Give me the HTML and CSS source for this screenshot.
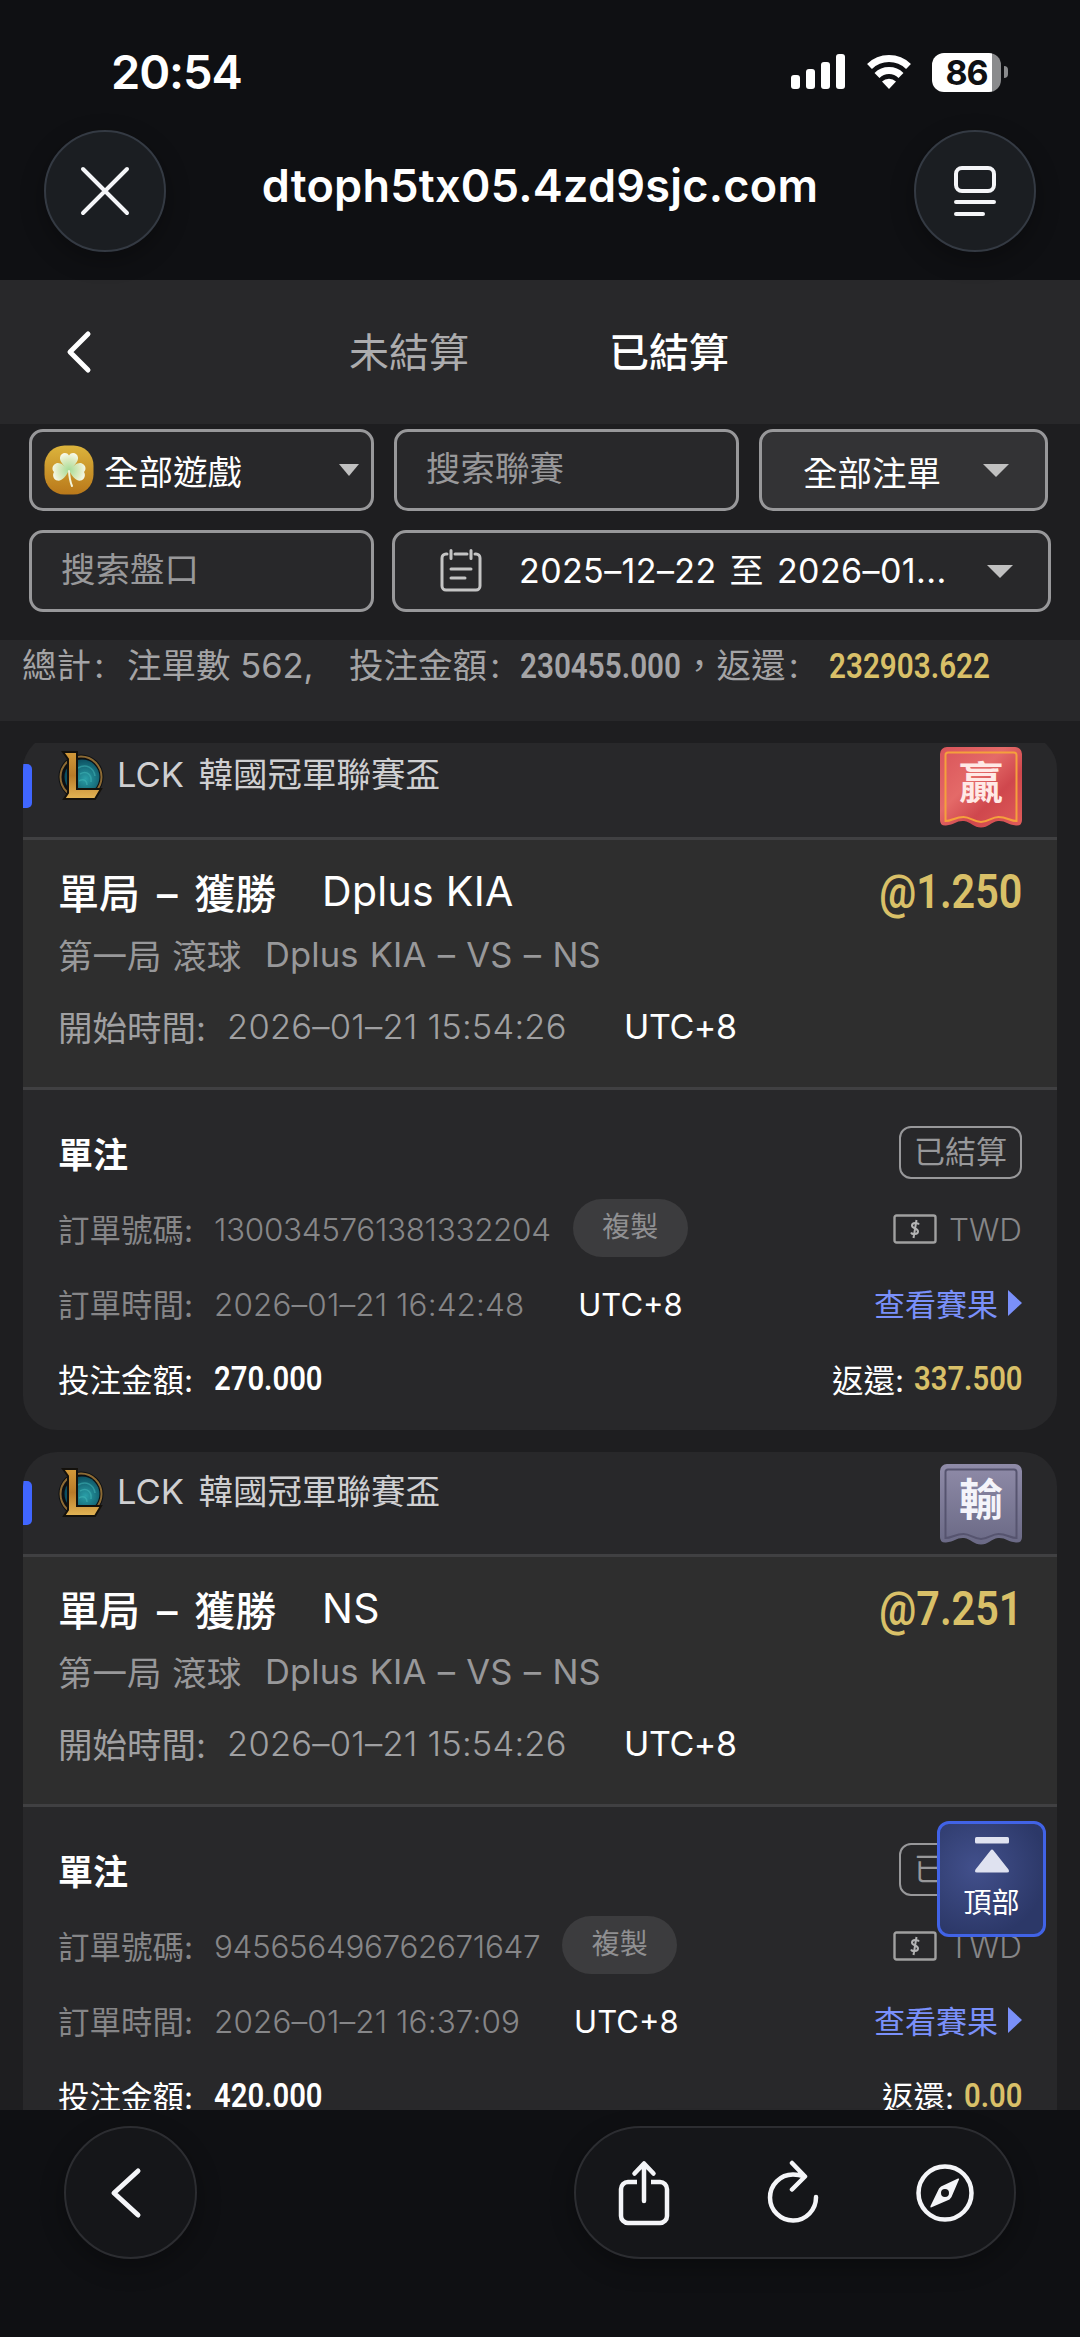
FILE: index.html
```html
<!DOCTYPE html>
<html lang="zh-Hant">
<head>
    <meta charset="UTF-8">
    <meta name="viewport" content="width=device-width, initial-scale=1.0">
    <title>已結算</title>
    <link rel="stylesheet" href="styles.css">
</head>
<body>
    <!-- shared icons -->
    <svg class="defs" width="0" height="0">
        <defs>
            <linearGradient id="gold" x1="0" y1="0" x2="0" y2="1">
                <stop offset="0" stop-color="#d39a3a"/>
                <stop offset="0.5" stop-color="#b97b28"/>
                <stop offset="1" stop-color="#e3b556"/>
            </linearGradient>
            <radialGradient id="teal" cx="0.6" cy="0.55" r="0.6">
                <stop offset="0" stop-color="#2a9fa8"/>
                <stop offset="1" stop-color="#0a4a5c"/>
            </radialGradient>
            <linearGradient id="red" x1="0" y1="0" x2="1" y2="1">
                <stop offset="0" stop-color="#d9545a"/>
                <stop offset="0.4" stop-color="#e46a68"/>
                <stop offset="0.65" stop-color="#cf474d"/>
                <stop offset="1" stop-color="#e05c5a"/>
            </linearGradient>
            <linearGradient id="grey" x1="0" y1="0" x2="0" y2="1">
                <stop offset="0" stop-color="#8f8ba8"/>
                <stop offset="1" stop-color="#6a6985"/>
            </linearGradient>
            <linearGradient id="coin" x1="0" y1="0" x2="0" y2="1">
                <stop offset="0" stop-color="#dcb43c"/>
                <stop offset="1" stop-color="#b9781a"/>
            </linearGradient>
            <radialGradient id="leaf" gradientUnits="userSpaceOnUse" cx="25" cy="25" r="18">
                <stop offset="0" stop-color="#a6dc98"/>
                <stop offset="0.6" stop-color="#dcebc0"/>
                <stop offset="1" stop-color="#fbfbf0"/>
            </radialGradient>
        </defs>
        <symbol id="lol" viewBox="0 0 46 50">
            <circle cx="23" cy="27" r="22.500" fill="#0c0f12"/>
            <circle cx="23" cy="27" r="20.500" fill="none" stroke="#8c6a34" stroke-width="2"/>
            <circle cx="24" cy="27" r="17.500" fill="url(#teal)"/>
            <path d="M20 18c8-5 16 0 17 8M22 24c7-4 12 1 11 8M21 31c5-3 8 0 8 4" fill="none" stroke="#43b9ba" stroke-width="1.6" opacity="0.5"/>
            <path d="M5 2h14v37h24l-6 10H6l4-6V9z" fill="url(#gold)" stroke="#14110c" stroke-width="2"/>
        </symbol>
        <symbol id="cash" viewBox="0 0 44 30">
            <rect x="1.5" y="1.5" width="41" height="27" rx="2" fill="none" stroke="#a0a0a0" stroke-width="2.4"/>
            <path d="M26 10.5c-1-2-7-2.400-7 1 0 3.500 6 2.500 6 6 0 3.300-6 3.300-7 1M23.500 6l-3 18" fill="none" stroke="#b4b4b4" stroke-width="2"/>
        </symbol>
        <symbol id="flag" viewBox="0 0 82 82">
            <path d="M7 0h68a7 7 0 0 1 7 7v66q0 6-6 5.500c-9-1-10-5-18-4.500-7 1-10 6.500-17 6.500s-10-5.500-17-6.500c-8-.5-9 3.500-18 4.500q-6 .5-6-5.500V7a7 7 0 0 1 7-7z"/>
        </symbol>
        <symbol id="flag-line" viewBox="0 0 82 82">
            <path d="M8 5.500h66q2.500 0 2.500 2.500v66c-6 0-10-4-18-4-7 0-10 5-17.500 5s-10.500-5-17.500-5c-8 0-12 4-18 4V8q0-2.500 2.500-2.500z" fill="none" stroke-width="2"/>
        </symbol>
    </svg>

    <div class="status">
        <span class="clock">20:54</span>
        <svg class="signal" width="54" height="36" viewBox="0 0 54 36" fill="#fff">
            <rect x="0" y="21" width="9" height="14" rx="3"/>
            <rect x="15" y="15" width="9" height="20" rx="3"/>
            <rect x="30" y="8" width="9" height="27" rx="3"/>
            <rect x="45" y="0" width="9" height="35" rx="3"/>
        </svg>
        <svg class="wifi" width="46" height="36" viewBox="0 0 46 36" fill="none" stroke="#fff" stroke-width="7">
            <path d="M3.500 12.500a28 28 0 0 1 39 0"/>
            <path d="M11 21.500a17 17 0 0 1 24 0"/>
            <path d="M23 35l-7-7.500a10 10 0 0 1 14 0z" fill="#fff" stroke="none"/>
        </svg>
        <span class="battery"><b>86</b></span>
        <span class="nub"></span>
    </div>

    <div class="address">
        <span class="round">
            <svg width="50" height="50" viewBox="0 0 50 50" fill="none" stroke="#f4f5f8" stroke-width="4" stroke-linecap="round"><path d="M3 3l44 44M47 3L3 47"/></svg>
        </span>
        <span class="url">dtoph5tx05.4zd9sjc.com</span>
        <span class="round">
            <svg width="44" height="52" viewBox="0 0 44 52" fill="none" stroke="#f4f5f8" stroke-width="4" stroke-linecap="round"><rect x="3" y="3" width="38" height="23" rx="6"/><path d="M3 37h38M3 49h27"/></svg>
        </span>
    </div>

    <div class="tabs">
        <svg class="back" width="26" height="44" viewBox="0 0 26 44" fill="none" stroke="#fff" stroke-width="5" stroke-linecap="round" stroke-linejoin="round"><path d="M22 4L4 22l18 18"/></svg>
        <span class="tab">未結算</span>
        <span class="tab active">已結算</span>
    </div>

    <div class="filters">
        <div class="box game">
            <svg width="50" height="50" viewBox="0 0 50 50">
                <rect x="0.5" y="0.5" width="49" height="49" rx="20" fill="url(#coin)"/>
                <g fill="url(#leaf)">
                    <path d="M25 26C19 20 15.500 16 16 12.500c.5-5 7-6 9-2 2-4 8.500-3 9 2 .5 3.500-3 7.500-9 13.500z"/>
                    <path d="M25 25c-5-5-9.500-8-13-6.500-4 1.500-4.500 6.500-2 8.500-2 3-.5 7.500 3 8.500 5 1 9-4 12-10.500z"/>
                    <path d="M25 25c5-5 9.500-8 13-6.500 4 1.500 4.500 6.500 2 8.500 2 3 .5 7.500-3 8.500-5 1-9-4-12-10.500z"/>
                </g>
                <path d="M25 26q.5 9 3 15" fill="none" stroke="#f3f5dc" stroke-width="2" stroke-linecap="round"/>
            </svg>
            <span>全部遊戲</span>
            <i class="caret small"></i>
        </div>
        <div class="box input">搜索聯賽</div>
        <div class="box bets"><span>全部注單</span><i class="caret"></i></div>
        <div class="box input">搜索盤口</div>
        <div class="box date">
            <svg width="42" height="44" viewBox="0 0 42 44" fill="none" stroke="#c4c4c4" stroke-width="3" stroke-linecap="round">
                <path d="M7 5H6a4 4 0 0 0-4 4v28a4 4 0 0 0 4 4h30a4 4 0 0 0 4-4V9a4 4 0 0 0-4-4h-1M15 5h12M11 1.500v8M31 1.500v8M11 20h20M11 29h14"/>
            </svg>
            <span>2025–12–22 至 2026–01...</span>
            <i class="caret"></i>
        </div>
    </div>

    <div class="summary">
        <span class="s-total">總計&#8202;:</span>
        <span class="s-count">注單數 562,</span>
        <span class="s-stake">投注金額&#8202;:</span>
        <span class="s-num"><b class="din">230455.000</b></span>
        <span class="s-return">，返還&#8202;:</span>
        <span class="s-num gold"><b class="din">232903.622</b></span>
    </div>

    <div class="list">
        <div class="card">
            <div class="card-head">
                <i class="mark"></i>
                <svg class="logo" width="46" height="50"><use href="#lol"/></svg>
                <span class="league">LCK 韓國冠軍聯賽盃</span>
                <div class="badge win">
                    <svg width="82" height="82"><use href="#flag" fill="url(#red)"/><use href="#flag-line" stroke="#f5a03c"/></svg>
                    <b>贏</b>
                </div>
            </div>
            <div class="card-body">
                <div class="row title"><span class="market">單局 – 獲勝</span><span class="pick">Dplus KIA</span><b class="odds din">@1.250</b></div>
                <div class="row match"><span class="stage">第一局 滾球</span><span class="teams">Dplus KIA – VS – NS</span></div>
                <div class="row start"><span class="label">開始時間:</span><span class="time">2026–01–21 15:54:26</span><span class="utc">UTC+8</span></div>
            </div>
            <div class="card-foot">
                <div class="row"><b class="single">單注</b><span class="chip">已結算</span></div>
                <div class="row"><span class="label">訂單號碼:</span><span class="number">1300345761381332204</span><span class="copy">複製</span><span class="currency"><svg width="44" height="30"><use href="#cash"/></svg>TWD</span></div>
                <div class="row"><span class="label">訂單時間:</span><span class="time">2026–01–21 16:42:48</span><span class="utc">UTC+8</span><a class="result">查看賽果<i></i></a></div>
                <div class="row money"><span class="label">投注金額:</span><b class="din stake">270.000</b><span class="back-label">返還:</span><span class="payout"><b class="din">337.500</b></span></div>
            </div>
        </div>

        <div class="card">
            <div class="card-head">
                <i class="mark"></i>
                <svg class="logo" width="46" height="50"><use href="#lol"/></svg>
                <span class="league">LCK 韓國冠軍聯賽盃</span>
                <div class="badge lose">
                    <svg width="82" height="82"><use href="#flag" fill="url(#grey)"/><use href="#flag-line" stroke="#56546f"/></svg>
                    <b>輸</b>
                </div>
            </div>
            <div class="card-body">
                <div class="row title"><span class="market">單局 – 獲勝</span><span class="pick">NS</span><b class="odds din">@7.251</b></div>
                <div class="row match"><span class="stage">第一局 滾球</span><span class="teams">Dplus KIA – VS – NS</span></div>
                <div class="row start"><span class="label">開始時間:</span><span class="time">2026–01–21 15:54:26</span><span class="utc">UTC+8</span></div>
            </div>
            <div class="card-foot">
                <div class="row"><b class="single">單注</b><span class="chip">已結算</span></div>
                <div class="row"><span class="label">訂單號碼:</span><span class="number">945656496762671647</span><span class="copy">複製</span><span class="currency"><svg width="44" height="30"><use href="#cash"/></svg>TWD</span></div>
                <div class="row"><span class="label">訂單時間:</span><span class="time">2026–01–21 16:37:09</span><span class="utc">UTC+8</span><a class="result">查看賽果<i></i></a></div>
                <div class="row money"><span class="label">投注金額:</span><b class="din stake">420.000</b><span class="back-label">返還:</span><span class="payout short"><b class="din">0.00</b></span></div>
            </div>
        </div>
    </div>

    <div class="to-top">
        <svg width="34" height="36" viewBox="0 0 34 36" fill="#dfe2f0"><rect width="34" height="6.500" rx="1.500"/><path d="M15.500 13.500q1.500-2 3 0l15 19q1.500 3-1.500 3H2q-3 0-1.500-3z"/></svg>
        <span>頂部</span>
    </div>

    <div class="toolbar">
        <span class="tool-back">
            <svg width="32" height="52" viewBox="0 0 32 52" fill="none" stroke="#f4f5f8" stroke-width="5" stroke-linecap="round" stroke-linejoin="round"><path d="M28 4L4 26l24 22"/></svg>
        </span>
        <span class="tools">
            <svg width="52" height="66" viewBox="0 0 52 66" fill="none" stroke="#f4f5f8" stroke-width="4.500"><path d="M19 22h-9a7 7 0 0 0-7 7v27a7 7 0 0 0 7 7h32a7 7 0 0 0 7-7V29a7 7 0 0 0-7-7h-9"/><path d="M26 41V4M16.500 13.500L26 3.500l9.500 10" stroke-linecap="round" stroke-linejoin="round"/></svg>
            <svg width="52" height="66" viewBox="0 0 52 66" fill="none" stroke="#f4f5f8" stroke-width="4.500" stroke-linecap="round" stroke-linejoin="round"><path d="M49 37a23 23 0 1 1-23-22.500q6 0 11 2M25 3l13 13.500-13 13"/></svg>
            <svg width="60" height="60" viewBox="0 0 60 60" fill="none" stroke="#f4f5f8" stroke-width="4.500"><circle cx="30" cy="30" r="26.500"/><path fill="#f4f5f8" stroke="none" fill-rule="evenodd" d="M44 16.500L36.500 34l-2 2.500L16 44.500q-1 0-.5-1.500L24 25.500l2-2L43 15.500q1.500-.5 1 1zM30 26a4 4 0 1 0 0 8 4 4 0 0 0 0-8z"/></svg>
        </span>
    </div>
</body>
</html>
```
FILE: styles.css
```css
* {
    box-sizing: border-box;
}
body {
    width: 1080px;
    height: 2337px;
    margin: 0;
    position: relative;
    overflow: hidden;
    background: #1e1e20;
    color: #fff;
    font-family: Inter, "Noto Sans CJK TC", sans-serif;
    font-size: 34.5px;
    white-space: nowrap;
}
svg {
    display: block;
    flex: none;
}
i {
    font-style: normal;
}
.defs {
    position: absolute;
}
.din {
    display: inline-block;
    font-family: Roboto, sans-serif;
    font-weight: 600;
    transform: scaleX(0.86);
    transform-origin: left center;
}

/* phone status bar */
.status {
    display: flex;
    align-items: center;
    height: 122px;
    padding: 22px 72px 0 111px;
    background: #0f1013;
}
.clock {
    flex: 1;
    margin-top: -2px;
    font-size: 47px;
    font-weight: 600;
    letter-spacing: -1.1px;
}
.wifi {
    margin: 0 20px 0 21px;
}
.battery {
    width: 69px;
    height: 39px;
    border-radius: 12px;
    background: linear-gradient(90deg, #fff 60px, #8a8b8d 60px);
    color: #0f1013;
    text-align: center;
}
.battery b {
    display: block;
    font-size: 34px;
    line-height: 40px;
    letter-spacing: -1px;
}
.nub {
    width: 4px;
    height: 12px;
    margin-left: 3px;
    border-radius: 0 4px 4px 0;
    background: #8a8b8d;
}

/* browser address */
.address {
    display: flex;
    justify-content: space-between;
    align-items: center;
    height: 158px;
    padding: 0 44px 20px;
    background: #0f1013;
}
.round {
    display: flex;
    justify-content: center;
    align-items: center;
    width: 122px;
    height: 122px;
    border: 2px solid #343a43;
    border-radius: 50%;
    background: #1b1e22;
    box-shadow: 0 8px 24px rgba(0, 0, 0, 0.3);
}
.url {
    margin-top: -12px;
    font-size: 45px;
    font-weight: 600;
    letter-spacing: 0.25px;
}

/* tabs */
.tabs {
    display: flex;
    align-items: center;
    height: 144px;
    padding-left: 66px;
    background: #28282a;
    font-size: 40px;
}
.tab {
    margin: -4px 0 0 257px;
    color: #acacae;
}
.tab.active {
    margin-left: 140px;
    color: #fff;
    font-weight: 500;
}

/* filters */
.filters {
    display: flex;
    flex-wrap: wrap;
    align-content: flex-start;
    gap: 19px 20px;
    height: 216px;
    padding: 5px 28px 0 29px;
}
.box {
    display: flex;
    align-items: center;
    width: 345px;
    height: 82px;
    border: 3px solid #98989a;
    border-radius: 14px;
    background: #28282a;
}
.caret {
    border: 13px solid transparent;
    border-top-color: #c0c0c0;
    border-bottom: 0;
}
.caret.small {
    border-width: 12px 10px 0;
}
.game {
    padding: 0 12px 0 12px;
}
.game span {
    flex: 1;
    margin-left: 10px;
}
.input {
    padding: 0 0 9px 29px;
    color: #98989a;
}
.bets {
    width: 289px;
    padding: 1px 36px 0 41px;
    justify-content: space-between;
    background: #333335;
}
.date {
    width: 659px;
    margin-left: -2px;
    padding: 0 35px 0 45px;
}
.date span {
    flex: 1;
    margin: -5px 0 0 37px;
    font-size: 34px;
    letter-spacing: 0.4px;
    word-spacing: 3px;
}

/* totals */
.summary {
    display: flex;
    height: 81px;
    padding-left: 22px;
    background: #28282a;
    color: #a4a4a6;
    line-height: 52px;
}
.s-total {
    width: 105px;
}
.s-count {
    width: 222px;
}
.s-stake {
    width: 171px;
}
.s-num {
    width: 162px;
}
.s-return {
    width: 147px;
}
.gold {
    color: #d9c068;
}

/* bet list, scrolled a little under the totals */
.list {
    display: flex;
    flex-direction: column;
    gap: 22px;
    height: 1367px;
    margin-top: 22px;
    padding: 0 23px;
    overflow: hidden;
}
.card {
    flex: none;
    height: 695px;
    border-radius: 34px;
    background: #28282a;
    overflow: hidden;
}
.card:first-child {
    margin-top: -8px;
}
.card-head {
    display: flex;
    align-items: flex-start;
    height: 102px;
    padding-right: 35px;
}
.mark {
    width: 9px;
    height: 44px;
    margin-top: 29px;
    border-radius: 0 5px 5px 0;
    background: #4066ff;
}
.logo {
    margin: 15px 13px 0 26px;
}
.league {
    flex: 1;
    line-height: 80px;
    color: #cfcfd1;
    word-spacing: 5px;
}
.badge {
    position: relative;
    width: 82px;
    margin-top: 12px;
}
.badge b {
    position: absolute;
    top: 0;
    left: 0;
    width: 82px;
    text-align: center;
    font-size: 44px;
    line-height: 72px;
    color: #ffe9e6;
}
.badge.lose b {
    color: #f4f4fa;
}
.card-body {
    height: 250px;
    padding: 21px 35px 0;
    border-top: 3px solid #404042;
    background: #2e2e2e;
}
.row {
    display: flex;
    align-items: center;
}
.title {
    height: 60px;
    font-size: 41px;
    font-weight: 500;
}
.market {
    width: 264px;
    word-spacing: 6px;
}
.pick {
    flex: 1;
    font-weight: 400;
    letter-spacing: 0.3px;
}
.odds {
    font-size: 48px;
    color: #d9c068;
    transform-origin: right center;
}
.match {
    height: 66px;
    color: #98989a;
}
.stage {
    width: 207px;
    word-spacing: 1px;
}
.teams {
    letter-spacing: 0.1px;
    word-spacing: 1.5px;
}
.start {
    height: 78px;
    color: #a0a0a2;
}
.start .label {
    width: 169px;
}
.start .time {
    width: 397px;
    padding-top: 1px;
    font-weight: 300;
    letter-spacing: 0.2px;
}
.utc {
    color: #fff;
}
.start .utc {
    padding-top: 1px;
    font-size: 34px;
    letter-spacing: -0.4px;
}
.card-foot {
    height: 343px;
    padding: 25px 35px 0;
    border-top: 3px solid #404042;
    font-size: 31.5px;
    color: #868688;
}
.card-foot .row {
    height: 75px;
}
.single {
    flex: 1;
    font-size: 35px;
    color: #fff;
}
.chip {
    width: 123px;
    height: 53px;
    border: 2px solid #98989a;
    border-radius: 12px;
    color: #98989a;
    font-size: 31px;
    line-height: 47px;
    text-align: center;
}
.card-foot .label {
    width: 156px;
}
.number,
.card-foot .time,
.currency {
    padding-top: 3px;
    font-weight: 300;
}
.number {
    letter-spacing: -0.35px;
}
.copy {
    width: 115px;
    height: 58px;
    margin-left: 22px;
    border-radius: 29px;
    background: #3c3c3e;
    color: #909092;
    font-size: 28px;
    line-height: 57px;
    text-align: center;
}
.currency {
    display: flex;
    align-items: center;
    gap: 12px;
    margin-left: auto;
}
.card-foot .utc {
    margin-left: 54px;
    padding-top: 3px;
    font-size: 31px;
}
.card-foot .time {
    letter-spacing: 0.1px;
}
.result {
    display: flex;
    align-items: center;
    gap: 10px;
    margin-left: auto;
    color: #7a90fa;
    font-size: 31px;
}
.result i {
    border: 13px solid transparent;
    border-left: 14px solid #7a90fa;
    border-right: 0;
}
.money {
    color: #fff;
}
.money .din {
    font-size: 34px;
}
.stake {
    flex: 1;
}
.payout {
    width: 108px;
    margin-left: 10px;
    color: #d9c068;
}
.payout.short {
    width: 58px;
}

/* back to top, floats over the list */
.to-top {
    position: absolute;
    left: 937px;
    top: 1821px;
    display: flex;
    flex-direction: column;
    align-items: center;
    width: 109px;
    height: 116px;
    padding-top: 13px;
    border: 3px solid #4163e6;
    border-radius: 12px;
    background: radial-gradient(circle at 35% 40%, #42508c, #2c3868 75%);
    font-size: 28px;
    line-height: 60px;
}

/* browser toolbar */
.toolbar {
    display: flex;
    justify-content: space-between;
    height: 227px;
    padding: 16px 64px 0;
    background: #0f1013;
}
.tool-back,
.tools {
    display: flex;
    align-items: center;
    height: 133px;
    border: 2px solid #2c2d31;
    border-radius: 67px;
    background: #151619;
    box-shadow: 0 8px 24px rgba(0, 0, 0, 0.3);
}
.tool-back {
    justify-content: center;
    width: 133px;
    padding-right: 9px;
}
.tools {
    justify-content: space-between;
    width: 442px;
    padding: 0 39px 0 42px;
}
```
